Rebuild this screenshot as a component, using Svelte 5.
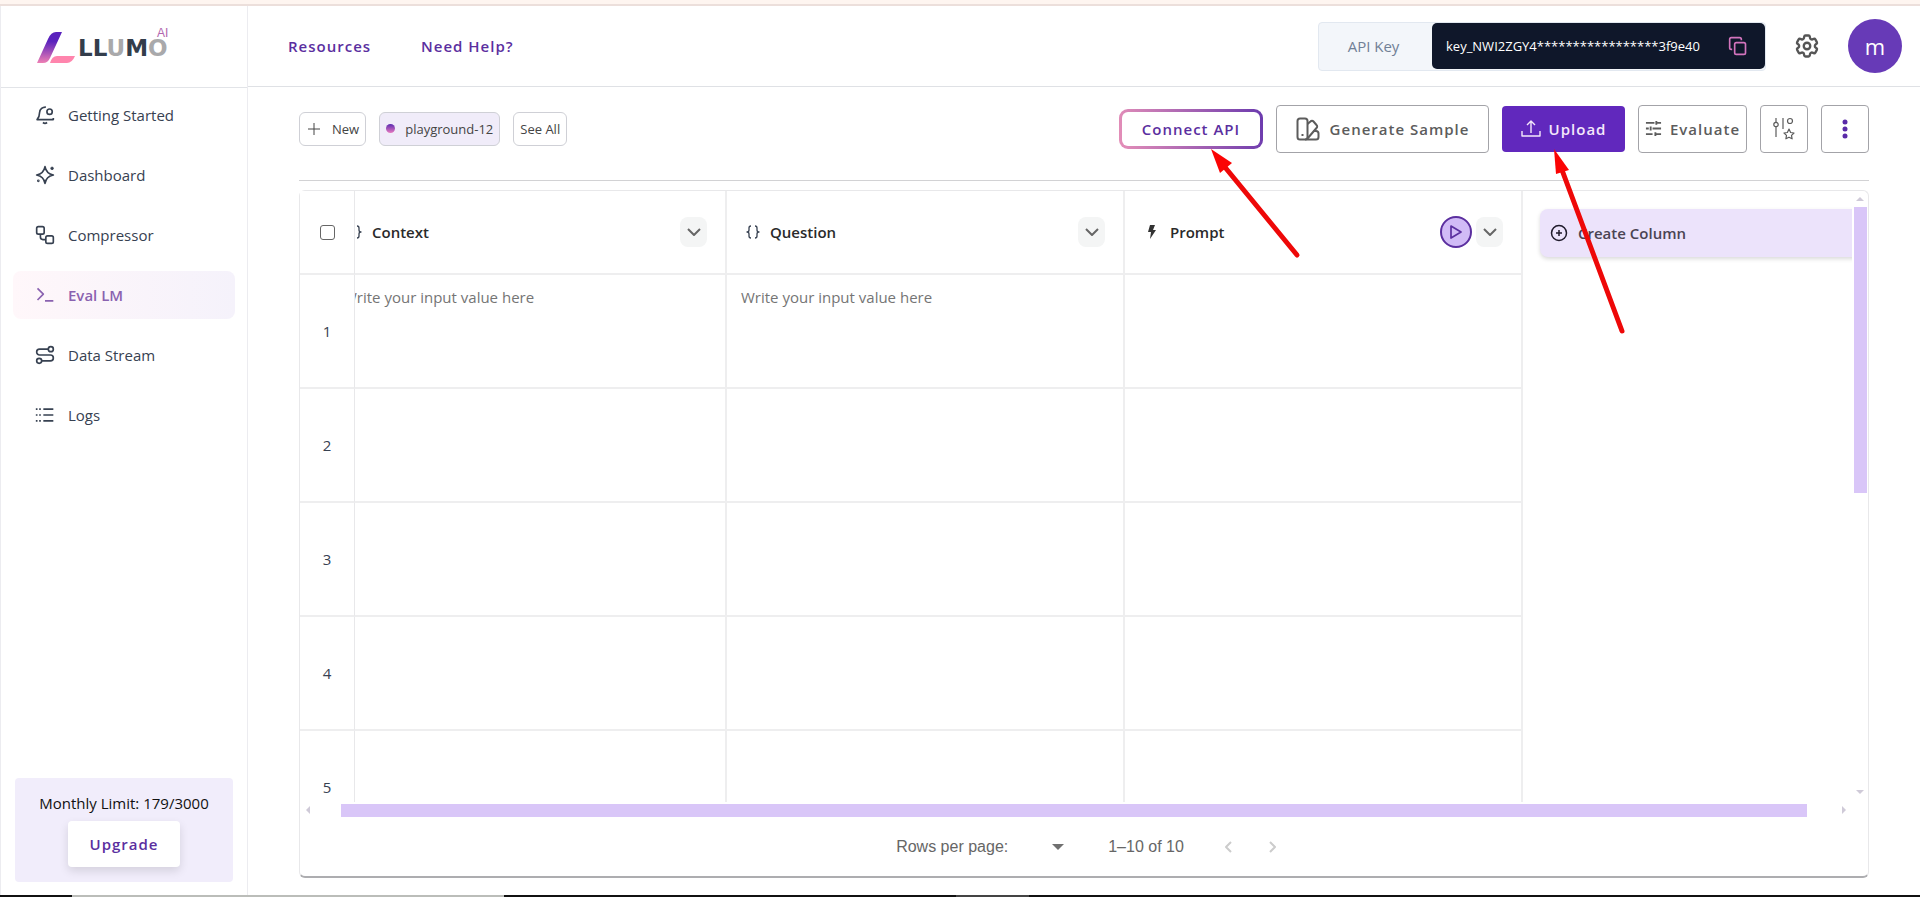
<script lang="ts">
	const navItems = [
		{ label: 'Getting Started', icon: 'bell' },
		{ label: 'Dashboard', icon: 'sparkle' },
		{ label: 'Compressor', icon: 'nodes' },
		{ label: 'Eval LM', icon: 'terminal', active: true },
		{ label: 'Data Stream', icon: 'route' },
		{ label: 'Logs', icon: 'list' }
	];

	const columns = [
		{ name: 'Context', kind: 'input' },
		{ name: 'Question', kind: 'input' },
		{ name: 'Prompt', kind: 'prompt' }
	];

	const visibleRows = [1, 2, 3, 4, 5];
	const placeholder = 'Write your input value here';

	let viewport: HTMLDivElement;

	$effect(() => {
		viewport.scrollLeft = 26;
	});
</script>

<svelte:head>
	<title>Eval LM</title>
</svelte:head>

{#snippet navIcon(name: string)}
	<svg class="icon" viewBox="0 0 24 24" width="20" height="20" aria-hidden="true">
		{#if name === 'bell'}
			<path d="M13 2.5a7 7 0 0 0-7.5 6.5Q5.5 14 2.5 17.5H22v-2" />
			<circle cx="17.5" cy="8" r="3.2" />
			<path d="M9.500 21q2.500 2 5 0" />
		{:else if name === 'sparkle'}
			<path d="M12 2q1.500 8.500 10 10-8.500 1.500-10 10-1.500-8.500-10-10Q10.500 10.500 12 2z" />
			<path d="M20.500 2v4M18.500 4h4" />
			<circle cx="4" cy="19" r=".6" />
		{:else if name === 'nodes'}
			<rect x="2" y="2" width="9" height="9" rx="2" />
			<rect x="13" y="13" width="9" height="9" rx="2" />
			<path d="M6.500 11v3.500a3 3 0 0 0 3 3H13" />
		{:else if name === 'terminal'}
			<path d="M3 4l7 7-7 7M12 19h10" />
		{:else if name === 'route'}
			<circle cx="19" cy="5" r="3" />
			<circle cx="5" cy="19" r="3" />
			<path d="M16 5H5.500a3.500 3.500 0 0 0 0 7h13a3.500 3.500 0 0 1 0 7H8" />
		{:else}
			<path d="M10 5h12M10 12h12M10 19h12" />
			<path d="M1 5h2M1 12h2M1 19h2M5 5h2M5 12h2M5 19h2" />
		{/if}
	</svg>
{/snippet}

<div class="app">
	<div class="top-strip"></div>

	<div class="shell">
		<aside class="sidebar">
			<a class="logo" href="/" aria-label="LLUMO AI">
				<svg class="mark" viewBox="0 0 38 32" width="38" height="32" aria-hidden="true">
					<defs>
						<linearGradient id="mark-fill" x1="0" y1="0" x2="0" y2="1">
							<stop offset="0.3" stop-color="#5a22bd" />
							<stop offset="1" stop-color="#ee7fb4" />
						</linearGradient>
					</defs>
					<path d="M25 0h-6q-5 0-8 7L0 31h6q5 0 7-5z" fill="url(#mark-fill)" />
					<path d="M20 24h18q-3 7-8 7H13q2-7 7-7z" fill="#ff85ad" />
				</svg>
				<span class="word">LL<i>U</i>M<i>O</i></span>
				<span class="ai">AI</span>
			</a>

			<nav class="menu">
				{#each navItems as item (item.label)}
					<a href="#{item.icon}" class="menu-link" class:is-active={item.active}>
						{@render navIcon(item.icon)}
						{item.label}
					</a>
				{/each}
			</nav>

			<div class="quota">
				<p>Monthly Limit: 179/3000</p>
				<button type="button" class="upgrade">Upgrade</button>
			</div>
		</aside>

		<div class="content">
			<header class="header">
				<a class="header-link" href="#resources">Resources</a>
				<a class="header-link" href="#help">Need Help?</a>

				<div class="api-key">
					<span class="api-label">API Key</span>
					<div class="api-value">
						<span>key_NWI2ZGY4*****************3f9e40</span>
						<button type="button" class="bare" aria-label="Copy key">
							<svg class="icon" viewBox="0 0 24 24" width="20" height="20">
								<rect x="8" y="8" width="13" height="14" rx="2" />
								<path d="M5 16H4a2 2 0 0 1-2-2V4a2 2 0 0 1 2-2h10a2 2 0 0 1 2 2v1" />
							</svg>
						</button>
					</div>
				</div>

				<button type="button" class="bare gear" aria-label="Settings">
					<svg class="icon" viewBox="0 0 24 24" width="28" height="28">
						<path
							d="M9.594 3.94c.09-.542.56-.94 1.11-.94h2.593c.55 0 1.02.398 1.11.94l.213 1.281c.063.374.313.686.645.87.074.04.147.083.22.127.325.196.72.257 1.075.124l1.217-.456a1.125 1.125 0 0 1 1.37.49l1.296 2.247a1.125 1.125 0 0 1-.26 1.431l-1.003.827c-.293.241-.438.613-.43.992a7.723 7.723 0 0 1 0 .255c-.008.378.137.75.43.991l1.004.827c.424.35.534.955.26 1.43l-1.298 2.247a1.125 1.125 0 0 1-1.369.491l-1.217-.456c-.355-.133-.75-.072-1.076.124a6.47 6.47 0 0 1-.22.128c-.331.183-.581.495-.644.869l-.213 1.281c-.09.543-.56.94-1.11.94h-2.594c-.55 0-1.019-.398-1.11-.94l-.213-1.281c-.062-.374-.312-.686-.644-.87a6.52 6.52 0 0 1-.22-.127c-.325-.196-.72-.257-1.076-.124l-1.217.456a1.125 1.125 0 0 1-1.369-.49l-1.297-2.247a1.125 1.125 0 0 1 .26-1.431l1.004-.827c.292-.24.437-.613.43-.991a6.932 6.932 0 0 1 0-.255c.007-.38-.138-.751-.43-.992l-1.004-.827a1.125 1.125 0 0 1-.26-1.43l1.297-2.247a1.125 1.125 0 0 1 1.37-.491l1.216.456c.356.133.751.072 1.076-.124.072-.044.146-.086.22-.128.332-.183.582-.495.644-.869l.214-1.28z"
						/>
						<circle cx="12" cy="12" r="2.8" />
					</svg>
				</button>
				<button type="button" class="avatar">m</button>
			</header>

			<main class="main">
				<div class="toolbar">
					<div class="chips">
						<button type="button" class="chip">
							<svg class="icon" viewBox="0 0 16 16" width="16" height="16" aria-hidden="true">
								<path d="M8 2v12M2 8h12" stroke-width="1" />
							</svg>
							New
						</button>
						<button type="button" class="chip is-current"><span class="dot"></span>playground-12</button>
						<button type="button" class="chip">See All</button>
					</div>

					<div class="actions">
						<div class="pointed">
							<button type="button" class="action connect">Connect API</button>
							<svg class="arrow to-connect" viewBox="0 0 95 112" width="95" height="112" aria-hidden="true">
								<path d="M17 18L90 107" />
								<path class="head" d="M4 1l21 14-12 10z" />
							</svg>
						</div>

						<button type="button" class="action generate">
							<svg class="icon" viewBox="0 0 24 24" width="24" height="24" aria-hidden="true">
								<rect x="1.5" y="1.5" width="10" height="21" rx="2.5" />
								<path d="M11.500 7l3-2.500a2 2 0 0 1 3 0l3 3.500a2 2 0 0 1 0 3l-9 10.500" />
								<path d="M17.500 14H20a2.500 2.500 0 0 1 2.500 2.500V20a2.500 2.500 0 0 1-2.500 2.500H9" />
								<path d="M6.500 17v2" />
							</svg>
							Generate Sample
						</button>

						<div class="pointed">
							<button type="button" class="action upload">
								<svg class="icon" viewBox="0 0 20 20" width="20" height="20" aria-hidden="true">
									<path d="M1 12v5h18v-5M10 14V2M6 6l4-4 4 4" stroke-width="1.4" />
								</svg>
								Upload
							</button>
							<svg class="arrow to-upload" viewBox="0 0 76 188" width="76" height="188" aria-hidden="true">
								<path d="M11 22L71 183" />
								<path class="head" d="M3 1l15 21-13 4z" />
							</svg>
						</div>

						<button type="button" class="action evaluate">
							<svg class="icon" viewBox="0 0 18 18" width="17" height="17" aria-hidden="true">
								<path d="M1 3h9M13 3h4M12 1v4M1 9h3M8 9h9M6 7v4M1 15h7M11 15h6M11 13v4" />
							</svg>
							Evaluate
						</button>

						<button type="button" class="action square" aria-label="Custom metrics">
							<svg class="icon" viewBox="0 0 22 24" width="22" height="24" aria-hidden="true">
								<g stroke-width="1.2">
									<path d="M3 1v4M3 10v10M10 1v11" />
									<circle cx="3" cy="7.5" r="2.2" />
									<circle cx="17" cy="4" r="2.5" />
									<path d="M16 12l1.600 3.500 3.400.5-2.500 2.400.6 3.400-3.100-1.600-3.100 1.600.6-3.400L11 16l3.400-.5z" />
								</g>
							</svg>
						</button>
						<button type="button" class="action square" aria-label="More">
							<svg viewBox="0 0 6 20" width="6" height="20" fill="#5a2aa8" aria-hidden="true">
								<circle cx="3" cy="3" r="2.5" />
								<circle cx="3" cy="10" r="2.5" />
								<circle cx="3" cy="17" r="2.5" />
							</svg>
						</button>
					</div>
				</div>

				<section class="card">
					<div class="grid-area">
						<div class="viewport" bind:this={viewport}>
							<table>
								<thead>
									<tr>
										<th class="num"><input type="checkbox" aria-label="Select all rows" /></th>
										{#each columns as column (column.name)}
											<th class="col">
												<div class="col-head">
													{#if column.kind === 'prompt'}
														<svg viewBox="0 0 16 16" width="16" height="16" fill="#333" aria-hidden="true">
															<path d="M6 1h5L9 6h3L6 15l1-7H4z" />
														</svg>
													{:else}
														<svg class="icon" viewBox="0 0 14 16" width="14" height="16" aria-hidden="true">
															<path
																d="M5 2Q3 2 3 4v2q0 2-2 2 2 0 2 2v2q0 2 2 2M9 2q2 0 2 2v2q0 2 2 2-2 0-2 2v2q0 2-2 2"
																stroke-width="1.3"
															/>
														</svg>
													{/if}
													<span class="col-name">{column.name}</span>
													{#if column.kind === 'prompt'}
														<button type="button" class="run" aria-label="Run prompt">
															<svg class="icon" viewBox="0 0 14 16" width="14" height="16">
																<path d="M2 2l10 6-10 6z" stroke-width="1.7" />
															</svg>
														</button>
													{/if}
													<button type="button" class="expand" aria-label="{column.name} options">
														<svg class="icon" viewBox="0 0 14 10" width="14" height="10">
															<path d="M1 2l6 6 6-6" />
														</svg>
													</button>
												</div>
											</th>
										{/each}
										<th class="create">
											<button type="button" class="create-button">
												<svg class="icon" viewBox="0 0 18 18" width="18" height="18" aria-hidden="true">
													<circle cx="9" cy="9" r="7.5" stroke-width="1.5" />
													<path d="M9 6v6M6 9h6" stroke-width="1.5" />
												</svg>
												Create Column
											</button>
										</th>
									</tr>
								</thead>
								<tbody>
									{#each visibleRows as row (row)}
										<tr>
											<td class="num">{row}</td>
											{#each columns as column (column.name)}
												<td class="col">{row === 1 && column.kind === 'input' ? placeholder : ''}</td>
											{/each}
											<td></td>
										</tr>
									{/each}
								</tbody>
							</table>
						</div>

						<div class="bar-y">
							<span class="tip up"></span>
							<div class="track"><div class="thumb"></div></div>
							<span class="tip down"></span>
						</div>
						<div class="bar-x">
							<span class="tip left"></span>
							<div class="track"><div class="thumb"></div></div>
							<span class="tip right"></span>
						</div>
					</div>

					<footer class="pager">
						<span>Rows per page:</span>
						<button type="button" class="bare caret" aria-label="Rows per page"><span class="tip down"></span></button>
						<span>1–10 of 10</span>
						<div class="pages">
							<button type="button" class="bare" aria-label="Previous page" disabled>
								<svg class="icon" viewBox="0 0 10 14" width="10" height="14"><path d="M8 2L3 7l5 5" /></svg>
							</button>
							<button type="button" class="bare" aria-label="Next page" disabled>
								<svg class="icon" viewBox="0 0 10 14" width="10" height="14"><path d="M2 2l5 5-5 5" /></svg>
							</button>
						</div>
					</footer>
				</section>
			</main>
		</div>
	</div>

	<div class="bottom-strip"></div>
</div>

<style>
	:global(body) {
		margin: 0;
		background: #fff;
	}

	.app {
		display: flex;
		flex-direction: column;
		height: 100vh;
		overflow: hidden;
		font-family: 'Open Sans', 'Noto Sans', sans-serif;
		font-size: 15px;
		line-height: 20px;
		color: #374151;
	}

	.app * {
		box-sizing: border-box;
	}

	button {
		padding: 0;
		font: inherit;
		color: inherit;
		cursor: pointer;
	}

	.bare {
		display: flex;
		background: none;
		border: 0;
	}

	a {
		color: inherit;
		text-decoration: none;
	}

	svg {
		display: block;
		flex: none;
	}

	.icon {
		fill: none;
		stroke: currentColor;
		stroke-width: 2;
		stroke-linejoin: round;
	}

	.top-strip {
		flex: none;
		height: 6px;
		background: #fef5f0;
		border-bottom: 2px solid #ecdfdb;
	}

	.bottom-strip {
		flex: none;
		height: 2px;
		background: linear-gradient(90deg, #111 72px, #bbbdb9 72px 504px, #111 504px 956px, #444 956px 1029px, #111 1029px);
	}

	.shell {
		display: flex;
		flex: 1;
		min-height: 0;
	}

	/* sidebar */

	.sidebar {
		display: flex;
		flex-direction: column;
		flex: none;
		width: 248px;
		border-inline: 1px solid #ececf0;
	}

	.logo {
		position: relative;
		display: flex;
		align-items: center;
		gap: 3px;
		height: 82px;
		padding: 3px 0 0 36px;
		border-bottom: 1px solid #e2e4e8;
	}

	.logo .word {
		font-family: 'DejaVu Sans', Verdana, sans-serif;
		font-size: 23px;
		font-weight: 700;
		line-height: 16px;
		color: #333d4b;
	}

	.logo i {
		font-style: normal;
		color: #a9a9ab;
	}

	.logo .ai {
		position: absolute;
		top: 21px;
		left: 156px;
		font-family: 'Liberation Sans', Arial, sans-serif;
		font-size: 12px;
		line-height: 12px;
		color: #b065ae;
	}

	.menu {
		display: flex;
		flex-direction: column;
		gap: 12px;
		padding: 3px 12px;
	}

	.menu-link {
		display: flex;
		align-items: center;
		gap: 13px;
		height: 48px;
		padding-left: 22px;
		border-radius: 8px;
	}

	.menu-link.is-active {
		font-weight: 600;
		color: #8a62b0;
		background: linear-gradient(90deg, #fff7fa, #f5f2fb);
	}

	.quota {
		display: flex;
		flex-direction: column;
		align-items: center;
		gap: 8px;
		margin: auto 14px 13px;
		padding: 15px 0;
		border-radius: 4px;
		background: #f1edfb;
		color: #111;
	}

	.quota p {
		margin: 0;
	}

	.upgrade {
		width: 112px;
		height: 46px;
		border: 0;
		border-radius: 4px;
		background: #fff;
		box-shadow: 0 4px 10px #0000001f;
		font-weight: 600;
		letter-spacing: 1px;
		color: #5b2f9f;
	}

	/* header */

	.content {
		display: flex;
		flex: 1;
		flex-direction: column;
		min-width: 0;
	}

	.header {
		display: flex;
		align-items: center;
		flex: none;
		height: 81px;
		padding: 0 18px 0 40px;
		border-bottom: 1px solid #dfe1e5;
	}

	.header-link {
		margin-right: 50px;
		font-weight: 600;
		letter-spacing: 1px;
		color: #5b2f9f;
	}

	.api-key {
		display: flex;
		align-items: center;
		height: 49px;
		margin-left: auto;
		border: 1px solid #e2e8f0;
		border-radius: 4px;
		background: #f3f6fa;
		font-weight: 500;
		color: #718096;
	}

	.api-label {
		width: 113px;
		padding-right: 4px;
		text-align: center;
	}

	.api-value {
		display: flex;
		align-items: center;
		justify-content: space-between;
		width: 333px;
		height: 46px;
		padding: 0 17px 0 14px;
		border-radius: 5px;
		background: #0f172a;
		font-size: 13px;
		color: #fff;
	}

	.api-value .bare {
		color: #d374bd;
	}

	.gear {
		margin: 0 27px;
		color: #555;
	}

	.avatar {
		width: 54px;
		height: 54px;
		border: 0;
		border-radius: 50%;
		background: #673ab7;
		font-size: 22px;
		font-weight: 500;
		color: #fff;
	}

	/* toolbar */

	.main {
		display: flex;
		flex: 1;
		flex-direction: column;
		min-height: 0;
		padding: 0 51px 17px;
	}

	.toolbar {
		display: flex;
		align-items: center;
		justify-content: space-between;
		flex: none;
		height: 94px;
		margin-bottom: 9px;
		padding-bottom: 10px;
		border-bottom: 1px solid #d2d2d4;
	}

	.chips,
	.actions {
		display: flex;
		align-items: center;
		gap: 13px;
	}

	.chip {
		display: flex;
		align-items: center;
		gap: 10px;
		height: 34px;
		padding: 0 6px;
		border: 1px solid #cfd0d6;
		border-radius: 6px;
		background: #fff;
		font-size: 13px;
		color: #444;
	}

	.chip.is-current {
		background: #f0ecf9;
	}

	.dot {
		width: 9px;
		height: 9px;
		border-radius: 50%;
		background: linear-gradient(#5b2bb0, #e87ac0);
	}

	.action {
		display: flex;
		align-items: center;
		justify-content: center;
		gap: 8px;
		height: 48px;
		border: 1px solid #a3a3a8;
		border-radius: 4px;
		background: #fff;
		font-weight: 600;
		letter-spacing: 1px;
		color: #5c5c5c;
	}

	.action.connect {
		width: 144px;
		height: 40px;
		border: 3px solid transparent;
		border-radius: 9px;
		background:
			linear-gradient(#fff, #fff) padding-box,
			linear-gradient(80deg, #e58fb8, #6b3aae) border-box;
		color: #5b2f9f;
	}

	.action.generate {
		gap: 10px;
		width: 213px;
	}

	.action.upload {
		width: 123px;
		height: 46px;
		border: 0;
		background: #6128bd;
		color: #f5e8fb;
	}

	.action.evaluate {
		width: 109px;
	}

	.action.square {
		width: 48px;
	}

	.pointed {
		position: relative;
	}

	.arrow {
		position: absolute;
		z-index: 3;
		fill: none;
		stroke: #ee0808;
		stroke-width: 5;
		stroke-linecap: round;
		pointer-events: none;
	}

	.arrow .head {
		fill: #fb0404;
		stroke: none;
	}

	.to-connect {
		top: 39px;
		left: 88px;
	}

	.to-upload {
		top: 42px;
		left: 49px;
	}

	/* table */

	.card {
		display: flex;
		flex: 1;
		flex-direction: column;
		min-height: 0;
		border: 1px solid #e8e8ea;
		border-bottom: 2px solid #adadb0;
		border-radius: 6px;
	}

	.grid-area {
		display: grid;
		flex: 1;
		grid-template-rows: minmax(0, 1fr) 16px;
		grid-template-columns: minmax(0, 1fr) 16px;
		min-height: 0;
	}

	.viewport {
		overflow: hidden;
	}

	table {
		width: calc(100% + 60px);
		table-layout: fixed;
		border-spacing: 0;
	}

	th,
	td {
		padding: 0;
		font-weight: 400;
		text-align: left;
	}

	th {
		height: 84px;
	}

	td {
		height: 114px;
	}

	.num,
	.col {
		border-bottom: 2px solid #eeeeef;
	}

	.num {
		position: sticky;
		left: 0;
		z-index: 1;
		width: 55px;
		border-right: 1px solid #e8e8ea;
		background: #fff;
		text-align: center;
	}

	.num input {
		appearance: none;
		display: block;
		width: 15px;
		height: 15px;
		margin: 0 auto;
		border: 1px solid #666;
		border-radius: 3px;
	}

	.col {
		width: 398px;
		border-right: 2px solid #eeeeef;
	}

	td.col {
		padding: 12px 14px;
		vertical-align: top;
		color: #757575;
	}

	.col-head {
		display: flex;
		align-items: center;
		padding: 0 18px 0 19px;
	}

	.col-name {
		flex: 1;
		margin-left: 10px;
		font-weight: 600;
		color: #2a2a2a;
	}

	.expand {
		display: grid;
		place-items: center;
		width: 27px;
		height: 30px;
		border: 0;
		border-radius: 8px;
		background: #f4f5f5;
		color: #666;
	}

	.run {
		display: grid;
		place-items: center;
		width: 32px;
		height: 32px;
		margin-right: 4px;
		border: 2px solid #5b2f9f;
		border-radius: 50%;
		background: #d1bbf6;
		color: #5b2f9f;
	}

	.create {
		padding-left: 17px;
	}

	.create-button {
		display: flex;
		align-items: center;
		gap: 10px;
		width: 100%;
		height: 48px;
		padding-left: 10px;
		border: 0;
		border-radius: 8px;
		background: #ece3fb;
		box-shadow: 0 2px 4px #00000026;
		font-weight: 600;
		color: #4a4453;
	}

	.create-button .icon {
		color: #1f1a2b;
	}

	/* scrollbars */

	.bar-x,
	.bar-y {
		display: flex;
		align-items: center;
	}

	.bar-y {
		flex-direction: column;
		padding: 6px 1px 8px;
	}

	.bar-x {
		padding: 0 6px;
	}

	.track {
		flex: 1;
	}

	.thumb {
		background: #d9c6f8;
	}

	.bar-y .track {
		width: 13px;
		padding-top: 6px;
	}

	.bar-y .thumb {
		height: 49%;
	}

	.bar-x .track {
		padding: 0 35px 0 31px;
	}

	.bar-x .thumb {
		height: 13px;
	}

	.tip {
		border: 4px solid transparent;
	}

	.tip.up {
		border-top: 0;
		border-bottom-color: #cfcad8;
	}

	.tip.down {
		border-bottom: 0;
		border-top-color: #cfcad8;
	}

	.tip.left {
		border-left: 0;
		border-right-color: #cfcad8;
	}

	.tip.right {
		border-right: 0;
		border-left-color: #cfcad8;
	}

	/* pagination */

	.pager {
		display: flex;
		align-items: center;
		justify-content: center;
		flex: none;
		height: 58px;
		padding-left: 6px;
		font-family: 'Liberation Sans', Arial, sans-serif;
		font-size: 16px;
		color: #666;
	}

	.caret {
		margin: 0 44px;
	}

	.caret .tip {
		border-width: 6px 6px 0;
		border-top-color: #707070;
	}

	.pages {
		display: flex;
		gap: 35px;
		margin-left: 39px;
		color: #ccc;
	}
</style>
